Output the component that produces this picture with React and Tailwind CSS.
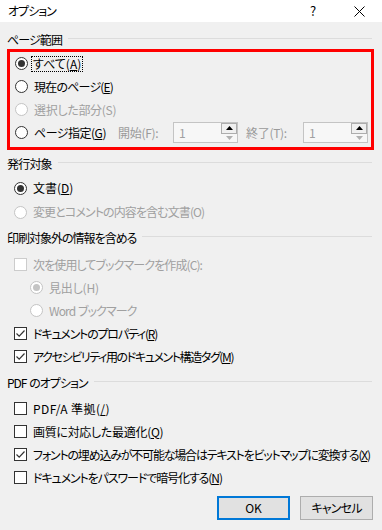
import React from 'react'

function Radio({checked, disabled}) {
    return (
        <span className={`w-[13px] h-[13px] rounded-full border bg-white flex items-center justify-center shrink-0 ${disabled ? 'border-[#c4c4c4]' : 'border-[#333333]'}`}>
            {checked && <span className={`w-[7px] h-[7px] rounded-full ${disabled ? 'bg-[#c4c4c4]' : 'bg-[#333333]'}`} />}
        </span>
    )
}

function Check({checked, disabled}) {
    return (
        <span className={`w-[13px] h-[13px] border bg-white flex items-center justify-center shrink-0 ${disabled ? 'border-[#cccccc]' : 'border-[#333333]'}`}>
            {checked && (
                <svg width="11" height="11" viewBox="0 0 11 11">
                    <polyline points="1.5,5.5 4.2,8.2 9.5,2.5" fill="none" stroke="#333333" strokeWidth="1.2" />
                </svg>
            )}
        </span>
    )
}

function Heading({children, t = 'tracking-[-0.6px]'}) {
    return (
        <div className="h-[18px] flex items-center pl-[7px] pr-[10px] gap-[6px]">
            <span className={`text-black whitespace-nowrap ${t}`}>{children}</span>
            <span className="flex-1 h-px bg-[#dcdcdc] -mt-[3px]" />
        </div>
    )
}

function Row({children, indent = 'pl-[14px]', h = 'h-[23px]', disabled}) {
    return (
        <div className={`${h} ${indent} flex items-center gap-[6px] ${disabled ? 'text-[#a0a0a0]' : 'text-black'}`}>
            {children}
        </div>
    )
}

function Spin() {
    return (
        <div className="w-[65px] h-[21px] border border-[#c4c4c4] bg-[#f7f7f7] flex items-stretch">
            <span className="flex-1 pl-[5px] text-[#a0a0a0] leading-[19px]">1</span>
            <div className="w-[16px] flex flex-col">
                <span className="flex-1 border border-[#adadad] bg-[#f0f0f0] flex items-center justify-center">
                    <svg width="7" height="4" viewBox="0 0 7 4"><polygon points="0,4 3.5,0 7,4" fill="#000" /></svg>
                </span>
                <span className="flex-1 flex items-center justify-center">
                    <svg width="7" height="4" viewBox="0 0 7 4"><polygon points="0,0 3.5,4 7,0" fill="#b0b0b0" /></svg>
                </span>
            </div>
        </div>
    )
}

export default function App() {
    return (
        <div className="w-[382px] h-[530px] bg-[#f0f0f0] text-[12px] font-['Noto_Sans_CJK_JP','Noto_Sans',sans-serif] [font-feature-settings:'palt'] overflow-hidden">
            <div className="h-[22px] bg-white flex items-center pl-[8px]">
                <span className="flex-1 text-black tracking-[-1px]">オプション</span>
                <span className="w-[46px] text-center text-[13px] text-black">?</span>
                <span className="w-[46px] flex justify-center">
                    <svg width="11" height="11" viewBox="0 0 11 11">
                        <path d="M0.5 0.5 L10.5 10.5 M10.5 0.5 L0.5 10.5" stroke="#000" strokeWidth="1" />
                    </svg>
                </span>
            </div>

            <div className="pt-[9px]">
                <Heading t="tracking-[-0.9px]">ページ範囲</Heading>
                <div className="ml-[7px] w-[367px] h-[101px] border-[3px] border-[#ff0000]">
                    <Row indent="pl-[5px]">
                        <Radio checked />
                        <span className="border border-dotted border-black px-[1px] leading-[14px] -ml-[3px]">すべて(<u>A</u>)</span>
                    </Row>
                    <Row indent="pl-[5px]">
                        <Radio />
                        <span className="tracking-[-0.8px]">現在のページ(<u>E</u>)</span>
                    </Row>
                    <Row indent="pl-[5px]" disabled>
                        <Radio disabled />
                        <span className="tracking-[-0.3px]">選択した部分(S)</span>
                    </Row>
                    <Row indent="pl-[5px]">
                        <Radio />
                        <span className="w-[78px] tracking-[-0.5px]">ページ指定(<u>G</u>)</span>
                        <span className="text-[#9a9a9a] w-[49px] tracking-[-0.3px]">開始(F):</span>
                        <Spin />
                        <span className="text-[#9a9a9a] ml-[2px] w-[51px] tracking-[-0.3px]">終了(T):</span>
                        <Spin />
                    </Row>
                </div>

                <div className="mt-[5px]">
                    <Heading t="tracking-[-0.8px]">発行対象</Heading>
                </div>
                <div className="pt-[3px]">
                    <Row h="h-[24px]">
                        <Radio checked />
                        <span>文書(<u>D</u>)</span>
                    </Row>
                    <Row h="h-[24px]" disabled>
                        <Radio disabled />
                        <span className="tracking-[-0.9px]">変更とコメントの内容を含む文書(O)</span>
                    </Row>
                </div>

                <div className="mt-[5px]">
                    <Heading t="tracking-[-1px]">印刷対象外の情報を含める</Heading>
                </div>
                <div className="pt-[6px]">
                    <Row disabled>
                        <Check disabled />
                        <span className="tracking-[-0.9px]">次を使用してブックマークを作成(C):</span>
                    </Row>
                    <Row indent="pl-[30px]" disabled>
                        <Radio checked disabled />
                        <span className="tracking-[-0.2px]">見出し(H)</span>
                    </Row>
                    <Row indent="pl-[30px]" disabled>
                        <Radio disabled />
                        <span className="tracking-[-0.9px]">Word<span className="tracking-normal"> </span>ブックマーク</span>
                    </Row>
                    <Row>
                        <Check checked />
                        <span className="tracking-[-1.2px]">ドキュメントのプロパティ(<u>R</u>)</span>
                    </Row>
                    <Row>
                        <Check checked />
                        <span className="tracking-[-1.4px]">アクセシビリティ用のドキュメント構造タグ(<u>M</u>)</span>
                    </Row>
                </div>

                <div className="mt-[6px]">
                    <Heading t="tracking-[-1px]">PDF<span className="tracking-normal"> </span>のオプション</Heading>
                </div>
                <div className="pt-[5px]">
                    <Row>
                        <Check />
                        <span className="tracking-[0.4px]">PDF/A 準拠(<u>/</u>)</span>
                    </Row>
                    <Row>
                        <Check />
                        <span className="tracking-[-0.3px]">画質に対応した最適化(<u>Q</u>)</span>
                    </Row>
                    <Row>
                        <Check checked />
                        <span className="whitespace-nowrap tracking-[-1.2px]">フォントの埋め込みが不可能な場合はテキストをビットマップに変換する(<u>X</u>)</span>
                    </Row>
                    <Row>
                        <Check />
                        <span className="tracking-[-1.1px]">ドキュメントをパスワードで暗号化する(<u>N</u>)</span>
                    </Row>
                </div>

                <div className="mt-[7px] flex justify-end gap-[10px] pr-[9px]">
                    <button className="w-[73px] h-[24px] border-2 border-[#0078d7] bg-[#e1e1e1] text-black">OK</button>
                    <button className="w-[73px] h-[24px] border border-[#adadad] bg-[#e1e1e1] text-black tracking-[-0.8px]">キャンセル</button>
                </div>
            </div>
        </div>
    )
}
